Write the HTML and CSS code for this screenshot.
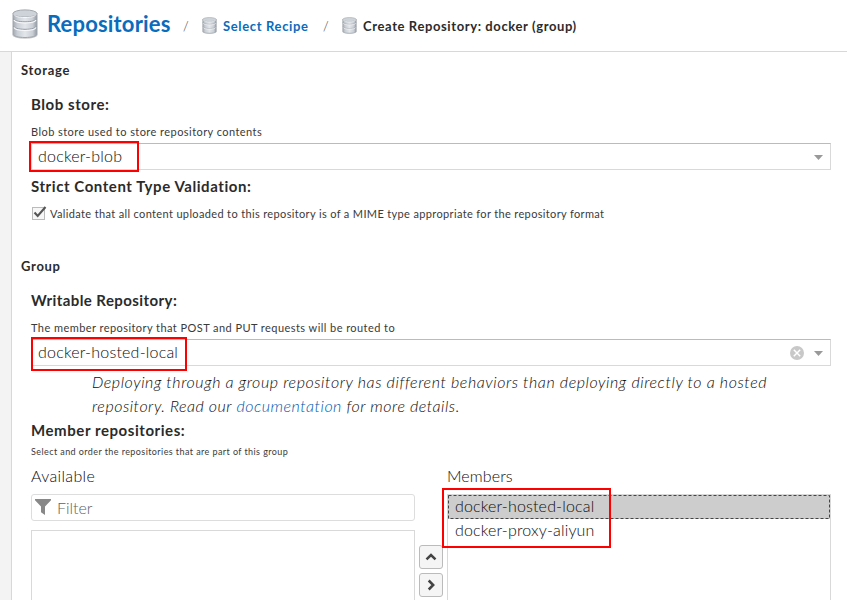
FILE: index.html
```html
<!DOCTYPE html>
<html lang="en">
<head>
<meta charset="utf-8">
<title>Create Repository</title>
<link rel="stylesheet" href="styles.css">
</head>
<body>
<svg width="0" height="0" class="defs">
  <defs>
    <linearGradient id="metal" x1="0" x2="1" y1="0" y2="0">
      <stop offset="0" stop-color="#a3a9b1"/><stop offset=".18" stop-color="#c9ced5"/><stop offset=".5" stop-color="#e3e7ec"/><stop offset=".82" stop-color="#c9ced5"/><stop offset="1" stop-color="#9299a1"/>
    </linearGradient>
    <symbol id="db" viewBox="0 0 26 30">
      <ellipse cx="13" cy="26" rx="12.5" ry="3.8" fill="#777" opacity=".4"/>
      <path d="M1 4.500v20.500c0 2 5 3.500 12 3.500s12-1.500 12-3.500V4.500z" fill="url(#metal)" stroke="#a0a6ad"/>
      <path d="M1.500 9.500c0 2 5 3.300 11.500 3.300s11.500-1.300 11.500-3.300M1.500 17c0 2 5 3.300 11.500 3.300S24.500 19 24.500 17" fill="none" stroke="#979da5"/>
      <path d="M2 11c1 2 5 3 11 3s10-1 11-3M2 18.500c1 2 5 3 11 3s10-1 11-3" fill="none" stroke="#f7f8fa" stroke-width="1.200"/>
      <ellipse cx="13" cy="4.500" rx="12" ry="3.600" fill="#ced3d9" stroke="#a0a6ad"/>
      <path d="M2 5.500c1 2 5 3 11 3s10-1 11-3" fill="none" stroke="#f7f8fa"/>
    </symbol>
  </defs>
</svg>
<header class="header">
  <svg class="db-large"><use href="#db"/></svg>
  <h1 class="title">Repositories</h1>
  <span class="slash">/</span>
  <svg class="db-small"><use href="#db"/></svg>
  <a class="crumb crumb-link">Select Recipe</a>
  <span class="slash">/</span>
  <svg class="db-small"><use href="#db"/></svg>
  <span class="crumb crumb-current">Create Repository: docker (group)</span>
</header>
<main class="main">
  <section class="storage">
    <h2 class="section-title">Storage</h2>
    <div class="fields">
      <h3 class="label">Blob store:</h3>
      <p class="help">Blob store used to store repository contents</p>
      <div class="combo">
        <span class="value">docker-blob</span>
        <svg class="arrow" viewBox="0 0 9 5"><path d="M0 0h9L4.500 5z"/></svg>
        <i class="mark mark-blob"></i>
      </div>
      <h3 class="label label-strict">Strict Content Type Validation:</h3>
      <div class="check-row">
        <svg class="check" viewBox="0 0 16 16"><rect x="1.500" y="2.500" width="12" height="12" fill="#f7f7f7" stroke="#bbb"/><path d="M3.500 7.500l3.200 3.500L14.500 2" fill="none" stroke="#555" stroke-width="2.100"/></svg>
        <span>Validate that all content uploaded to this repository is of a MIME type appropriate for the repository format</span>
      </div>
    </div>
  </section>
  <section class="group">
    <h2 class="section-title">Group</h2>
    <div class="fields">
      <h3 class="label label-writable">Writable Repository:</h3>
      <p class="help">The member repository that POST and PUT requests will be routed to</p>
      <div class="combo">
        <span class="value">docker-hosted-local</span>
        <svg class="clear" viewBox="0 0 14 14"><circle cx="7" cy="7" r="7" fill="#c8c8c8"/><path d="M3.800 3.800l6.400 6.400M10.200 3.800l-6.400 6.400" stroke="#fff" stroke-width="1.500"/></svg>
        <svg class="arrow" viewBox="0 0 9 5"><path d="M0 0h9L4.500 5z"/></svg>
        <i class="mark mark-writable"></i>
      </div>
      <p class="note"><span>Deploying through a group repository has different behaviors than deploying directly to a hosted</span><br><span class="note-end">repository. Read our <a>documentation</a> for more details.</span></p>
      <h3 class="label">Member repositories:</h3>
      <p class="tiny">Select and order the repositories that are part of this group</p>
      <div class="picker">
        <div class="column">
          <div class="col-title col-available">Available</div>
          <div class="filter">
            <svg class="funnel" viewBox="0 0 16 16"><path d="M0 0h16v1.200L10 7.500V16l-4-2.800V7.500L0 1.200z"/></svg>
            <span class="placeholder">Filter</span>
          </div>
          <div class="list"></div>
        </div>
        <div class="buttons">
          <button><svg viewBox="0 0 12 12"><path d="M1.500 8.300L6 4l4.500 4.300"/></svg></button>
          <button><svg viewBox="0 0 12 12"><path d="M3.700 1.500L8.200 6l-4.500 4.500"/></svg></button>
        </div>
        <div class="column">
          <div class="col-title">Members</div>
          <div class="list list-members">
            <div class="row row-selected">docker-hosted-local<svg class="dash"><rect x=".5" y=".5" width="381" height="23"/></svg></div>
            <div class="row">docker-proxy-aliyun</div>
            <i class="mark mark-members"></i>
          </div>
        </div>
      </div>
    </div>
  </section>
</main>
</body>
</html>
```
FILE: styles.css
```css
* { box-sizing: border-box; }
body { margin: 0; width: 847px; height: 600px; overflow: hidden; background: #fff; color: #0c0c0c; font-family: Lato, "Open Sans", sans-serif; font-size: 16px; font-weight: 300; }
h1, h2, h3, p { margin: 0; }
span, a { white-space: nowrap; }
.defs { position: absolute; }
.header { height: 52px; border-bottom: 1px solid #d8d8d8; display: flex; align-items: center; padding-left: 12px; }
.db-large { width: 26px; height: 30px; margin-top: -3px; }
.title { width: 124px; margin: -4px 12px 0 9px; font-size: 22px; line-height: 30px; letter-spacing: .17px; color: #0a6cbc; white-space: nowrap; }
.slash { width: 7px; margin-right: 12px; font-size: 13px; color: #333; }
.db-small { width: 15px; height: 17px; }
.crumb { font-size: 13px; font-weight: 700; margin-left: 6px; letter-spacing: .61px; color: #2b2b2b; }
.crumb-link { width: 86px; margin-right: 14px; color: #0a6cbc; letter-spacing: .65px; }
.main { height: 548px; overflow: hidden; margin-left: 11px; padding-left: 9px; border-left: 1px solid #d8d8d8; box-shadow: -11px 0 #f3f3f3; }
.section-title { font-size: 13px; line-height: 16px; letter-spacing: .7px; color: #2b2b2b; }
.storage { height: 196px; padding-top: 10px; }
.group { padding-top: 10px; }
.fields { margin-left: 10px; width: 800px; padding-top: 14px; }
.label { font-size: 15px; line-height: 24px; letter-spacing: .57px; color: #2b2b2b; white-space: nowrap; }
.label-writable { letter-spacing: .42px; }
.help { font-size: 11px; font-weight: 400; line-height: 16px; padding-top: 8px; height: 27px; letter-spacing: .44px; color: #3a3a3a; white-space: nowrap; }
.combo { position: relative; height: 27px; border: 1px solid #d9d9d9; border-top-color: #bbb; display: flex; align-items: center; padding: 0 7px 0 6px; }
.value { margin-right: auto; margin-top: -2px; letter-spacing: .21px; }
.arrow { width: 9px; height: 5px; margin-top: 1px; fill: #999; }
.clear { width: 14px; height: 14px; margin-right: 10px; }
.mark { position: absolute; border: 2px solid #f00; }
.mark-blob { left: -3px; top: -3px; width: 110px; height: 31px; }
.mark-writable { left: -1px; top: -3px; width: 156px; height: 34px; }
.mark-members { left: -6px; top: -7px; width: 169px; height: 60px; }
.label-strict { margin-top: 4px; }
.check-row { display: flex; align-items: center; height: 30px; font-size: 11px; font-weight: 400; letter-spacing: .355px; color: #3a3a3a; }
.check { width: 16px; height: 16px; margin-right: 3px; margin-top: -1px; }
.note { padding: 4px 0 0 61px; font-style: italic; line-height: 24px; height: 52px; letter-spacing: .572px; }
.note-end { letter-spacing: .52px; }
.note a { color: #0058ad; }
.tiny { font-size: 9px; font-weight: 400; line-height: 16px; padding-top: 2px; height: 23px; letter-spacing: .42px; color: #3a3a3a; white-space: nowrap; }
.picker { display: flex; }
.column { width: 384px; }
.col-title { line-height: 22px; height: 29px; letter-spacing: .1px; }
.col-available { letter-spacing: .35px; }
.filter { height: 27px; border: 1px solid #ddd; border-radius: 3px; display: flex; align-items: center; padding-left: 3px; color: #606060; }
.placeholder { margin-top: -1px; }
.funnel { width: 16px; height: 16px; fill: #888; margin-right: 6px; margin-top: -1px; }
.list { position: relative; margin-top: 9px; height: 70px; border: 1px solid #d9d9d9; border-bottom: 0; }
.buttons { width: 32px; padding: 80px 4px 0; display: flex; flex-direction: column; gap: 4px; }
.buttons button { width: 24px; height: 24px; padding: 0; border: 1px solid #bbb; border-radius: 3px; background: #f5f5f5; display: grid; place-items: center; }
.buttons svg { width: 12px; height: 12px; fill: none; stroke: #444; stroke-width: 2.500; }
.list-members { margin-top: 0; height: 106px; }
.row { position: relative; height: 24px; line-height: 22px; padding-left: 7px; letter-spacing: .17px; }
.row-selected { background: #cdcdcd; }
.dash { position: absolute; left: 0; top: 0; width: 382px; height: 24px; }
.dash rect { fill: none; stroke: #444; stroke-dasharray: 3 2; }
```
